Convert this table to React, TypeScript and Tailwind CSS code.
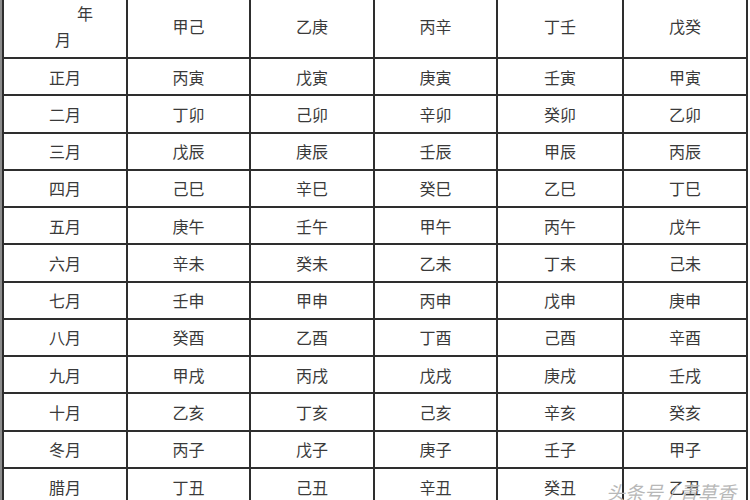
const stems = ["甲己", "乙庚", "丙辛", "丁壬", "戊癸"];

const rows: [string, string[]][] = [
  ["正月", ["丙寅", "戊寅", "庚寅", "壬寅", "甲寅"]],
  ["二月", ["丁卯", "己卯", "辛卯", "癸卯", "乙卯"]],
  ["三月", ["戊辰", "庚辰", "壬辰", "甲辰", "丙辰"]],
  ["四月", ["己巳", "辛巳", "癸巳", "乙巳", "丁巳"]],
  ["五月", ["庚午", "壬午", "甲午", "丙午", "戊午"]],
  ["六月", ["辛未", "癸未", "乙未", "丁未", "己未"]],
  ["七月", ["壬申", "甲申", "丙申", "戊申", "庚申"]],
  ["八月", ["癸酉", "乙酉", "丁酉", "己酉", "辛酉"]],
  ["九月", ["甲戌", "丙戌", "戊戌", "庚戌", "壬戌"]],
  ["十月", ["乙亥", "丁亥", "己亥", "辛亥", "癸亥"]],
  ["冬月", ["丙子", "戊子", "庚子", "壬子", "甲子"]],
  ["腊月", ["丁丑", "己丑", "辛丑", "癸丑", "乙丑"]],
];

function Cell({ children }: { children: React.ReactNode }) {
  return (
    <div className="bg-white flex items-center justify-center text-[16px] text-[#3a3a3a]">
      {children}
    </div>
  );
}

export default function App() {
  return (
    <div
      className="relative w-[750px] h-[500px] overflow-hidden bg-white flex"
      style={{ fontFamily: '"Noto Sans CJK SC", "Noto Sans", sans-serif' }}
    >
      <div className="w-[2px] shrink-0 bg-[#8c8c8c]" />
      <div className="w-[746px] shrink-0 self-start bg-[#2e2e2e] px-[2px] pb-[2px]">
        <div className="grid grid-cols-[122px_121px_122px_121px_124px_122px] grid-rows-[57px_repeat(12,35.27px)] gap-[2px]">
          <div className="bg-white relative text-[16px] text-[#3a3a3a]">
            <span className="absolute left-[73px] top-[1px]">年</span>
            <span className="absolute left-[51px] top-[27px]">月</span>
          </div>
          {stems.map((s) => (
            <div key={s} className="bg-white flex items-center justify-center pb-[5px] text-[16px] text-[#3a3a3a]">
              {s}
            </div>
          ))}
          {rows.map(([month, vals]) => (
            <>
              <Cell key={month}>{month}</Cell>
              {vals.map((v) => (
                <Cell key={month + v}>{v}</Cell>
              ))}
            </>
          ))}
        </div>
      </div>
      <div className="absolute left-[606px] top-[478px] text-[19px] italic text-[#b8b8b8] tracking-[0px] whitespace-nowrap">
        头条号 / 青草香
      </div>
    </div>
  );
}
